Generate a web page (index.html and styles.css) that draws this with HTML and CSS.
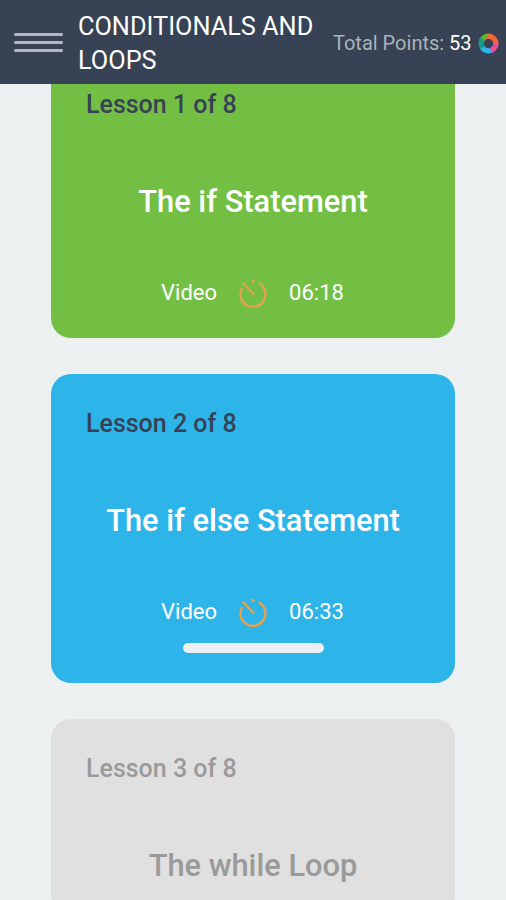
FILE: index.html
```html
<!DOCTYPE html>
<html lang="en">
<head>
    <meta charset="UTF-8">
    <meta name="viewport" content="width=device-width, initial-scale=1.0">
    <title>Conditionals and Loops</title>
    <link rel="stylesheet" href="styles.css">
</head>
<body>

<header class="topbar">
    <div class="menu-icon">
        <span></span>
        <span></span>
        <span></span>
    </div>
    <h1>CONDITIONALS AND LOOPS</h1>
    <p class="points">Total Points: <b>53</b></p>
    <svg class="points-logo" viewBox="0 0 22 22" width="21" height="21">
        <path transform="rotate(288 11 11)" d="M11 .5A10.500 10.500 0 0 1 21.500 11L16 11A5 5 0 0 0 6.700 8.500Z" fill="#5cb531"/>
        <path transform="rotate(216 11 11)" d="M11 .5A10.500 10.500 0 0 1 21.500 11L16 11A5 5 0 0 0 6.700 8.500Z" fill="#149c86"/>
        <path transform="rotate(144 11 11)" d="M11 .5A10.500 10.500 0 0 1 21.500 11L16 11A5 5 0 0 0 6.700 8.500Z" fill="#2cb5e8"/>
        <path transform="rotate(72 11 11)" d="M11 .5A10.500 10.500 0 0 1 21.500 11L16 11A5 5 0 0 0 6.700 8.500Z" fill="#e84d9a"/>
        <path d="M11 .5A10.500 10.500 0 0 1 21.500 11L16 11A5 5 0 0 0 6.700 8.500Z" fill="#f2663a"/>
    </svg>
</header>

<main class="lessons">
    <div class="card card-green">
        <p class="lesson-no">Lesson 1 of 8</p>
        <h2>The if Statement</h2>
        <div class="meta">
            <span>Video</span>
            <svg class="timer" viewBox="0 0 30 30" width="30" height="30">
                <path d="M21.500 5.800A12.500 12.500 0 1 1 3.700 11" fill="none" stroke="#e5a24a" stroke-width="2.500" stroke-linecap="round"/>
                <circle cx="15" cy="3.500" r="1.800" fill="#e5a24a"/>
                <path d="M5.500 5.500L15.500 16" stroke="#e5a24a" stroke-width="2.500" stroke-linecap="round"/>
            </svg>
            <span>06:18</span>
        </div>
    </div>

    <div class="card card-blue">
        <p class="lesson-no">Lesson 2 of 8</p>
        <h2>The if else Statement</h2>
        <div class="meta">
            <span>Video</span>
            <svg class="timer" viewBox="0 0 30 30" width="30" height="30">
                <path d="M21.500 5.800A12.500 12.500 0 1 1 3.700 11" fill="none" stroke="#e5a24a" stroke-width="2.500" stroke-linecap="round"/>
                <circle cx="15" cy="3.500" r="1.800" fill="#e5a24a"/>
                <path d="M5.500 5.500L15.500 16" stroke="#e5a24a" stroke-width="2.500" stroke-linecap="round"/>
            </svg>
            <span>06:33</span>
        </div>
        <div class="progress"></div>
    </div>

    <div class="card card-grey">
        <p class="lesson-no">Lesson 3 of 8</p>
        <h2>The while Loop</h2>
    </div>
</main>

</body>
</html>
```

FILE: styles.css
```css
html, body {
    height: 100%;
}
body {
    font-family: Roboto, sans-serif;
    background-color: #ecf0f1;
    margin: 0;
    padding: 0;
    overflow: hidden;
}
.topbar {
    position: relative;
    z-index: 2;
    height: 84px;
    box-sizing: border-box;
    display: flex;
    align-items: center;
    padding: 0 7px 0 14px;
    background-color: #374255;
    color: #fff;
}
.menu-icon {
    width: 49px;
    display: flex;
    flex-direction: column;
    gap: 5px;
    margin-right: 15px;
}
.menu-icon span {
    height: 3px;
    border-radius: 2px;
    background-color: #b4b8bd;
}
h1 {
    margin: 4px 0 0;
    width: 255px;
    font-size: 25.3px;
    line-height: 34px;
    font-weight: 400;
}
.points {
    margin: 2px 0 0;
    flex: none;
    font-size: 20px;
    color: #a9b3bb;
    white-space: nowrap;
}
.points b {
    font-weight: 400;
    color: #fff;
}
.points-logo {
    flex: none;
    margin: 2px 0 0 6px;
}
.lessons {
    padding: 0 51px;
    margin-top: -29px;
}
.card {
    box-sizing: border-box;
    margin-bottom: 36px;
    padding: 33px 36px 30px;
    border-radius: 20px;
    color: #fff;
}
.card-green {
    background-color: #72bf44;
}
.card-blue {
    background-color: #2db5ea;
}
.card-grey {
    background-color: #e0e0e0;
    color: #9a9a9a;
}
.lesson-no {
    margin: 0 0 0 -1px;
    font-size: 25px;
    line-height: 34px;
    font-weight: 500;
    color: #374255;
}
.card-grey .lesson-no {
    color: #9a9a9a;
}
h2 {
    margin: 60px 0 0;
    text-align: center;
    font-size: 30.8px;
    line-height: 40px;
    font-weight: 500;
}
.meta {
    display: flex;
    justify-content: center;
    align-items: center;
    gap: 21px;
    margin-top: 56px;
    padding-right: 1px;
    font-size: 22px;
    line-height: 30px;
}
.progress {
    width: 141px;
    height: 10px;
    margin: 16px auto 0;
    border-radius: 5px;
    background-color: #edf0f2;
}
```
